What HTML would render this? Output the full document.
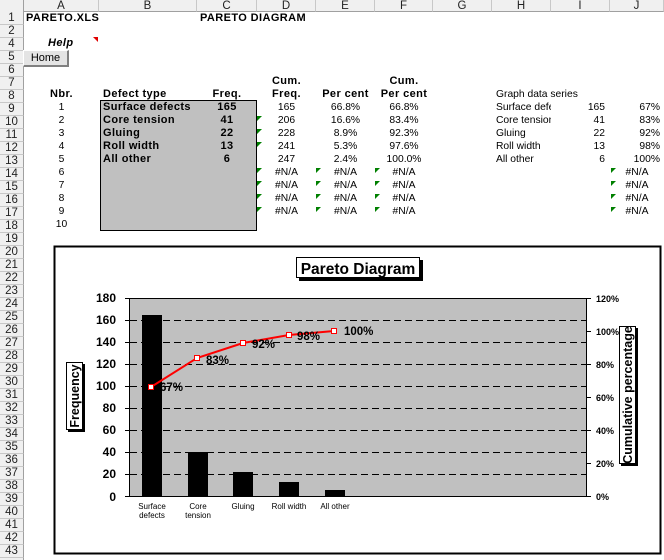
<!DOCTYPE html>
<html><head><meta charset="utf-8"><style>
*{margin:0;padding:0;box-sizing:border-box}
body{width:664px;height:560px;overflow:hidden;background:#fff;font-family:"Liberation Sans",Arial,sans-serif;font-size:10.3px;color:#000;position:relative}
.a{position:absolute;height:13px;line-height:13px;white-space:nowrap;overflow:hidden}
.b{font-weight:bold;font-size:11px;letter-spacing:0.4px}
.c{text-align:center}.r{text-align:right}
.hd{position:absolute;background:#f0f0f0;color:#222;font-size:11.5px;text-align:center}
.g{position:absolute;width:0;height:0;border-top:5px solid #008000;border-right:5px solid transparent}
</style></head><body>
<div class="hd" style="left:0;top:0;width:664px;height:12px;border-bottom:1px solid #a0a0a0"></div>
<div class="hd" style="left:0;top:0;width:24px;height:560px;border-right:1px solid #a0a0a0"></div>
<div id="cols"></div>
<div id="rows"></div>
<script>
var cb=[24,99,197,257,316,375,433,492,551,610,664],n="ABCDEFGHIJ",h="";
for(var i=0;i<10;i++){h+='<div class="hd" style="left:'+cb[i]+'px;top:0;width:'+(cb[i+1]-cb[i])+'px;height:12px;line-height:12px;border-right:1px solid #c8c8c8;border-bottom:1px solid #a0a0a0">'+n[i]+'</div>';}
document.getElementById('cols').innerHTML=h;h="";
var rs=[1,2];for(var r=4;r<=43;r++)rs.push(r);
for(var k=0;k<rs.length;k++){h+='<div class="hd" style="left:0;top:'+(12+13*k)+'px;width:24px;height:13px;line-height:13px;border-bottom:1px solid #c8c8c8;border-right:1px solid #a0a0a0">'+rs[k]+'</div>';}
document.getElementById('rows').innerHTML=h;
</script>
<div class="a b" style="left:26px;top:12px">PARETO.XLS</div>
<div class="a b" style="left:200px;top:12px">PARETO DIAGRAM</div>
<div class="a b" style="left:48px;top:37px;font-style:italic;font-size:11px">Help</div>
<div style="position:absolute;left:93px;top:37px;width:0;height:0;border-top:5px solid #e00000;border-left:5px solid transparent"></div>
<div style="position:absolute;left:23px;top:50px;width:46px;height:17px;background:#e4e4e4;border:1px solid #fff;border-right:2px solid #808080;border-bottom:2px solid #808080;text-align:center;line-height:14px;font-size:11px">Home</div>
<div style="position:absolute;left:100px;top:100px;width:157px;height:131px;background:#c0c0c0;border:1px solid #000"></div>
<div class="a b c" style="left:257px;top:75px;width:59px">Cum.</div>
<div class="a b c" style="left:375px;top:75px;width:58px">Cum.</div>
<div class="a b c" style="left:24px;top:88px;width:75px">Nbr.</div>
<div class="a b" style="left:103px;top:88px">Defect type</div>
<div class="a b c" style="left:197px;top:88px;width:60px">Freq.</div>
<div class="a b c" style="left:257px;top:88px;width:59px">Freq.</div>
<div class="a b c" style="left:316px;top:88px;width:59px">Per cent</div>
<div class="a b c" style="left:375px;top:88px;width:58px">Per cent</div>
<div class="a" style="left:496px;top:88px">Graph data series</div>

<div class="a c" style="left:24px;top:101px;width:75px">1</div><div class="a b" style="left:103px;top:101px">Surface defects</div><div class="a b c" style="left:197px;top:101px;width:60px">165</div><div class="a c" style="left:257px;top:101px;width:59px">165</div><div class="a c" style="left:316px;top:101px;width:59px">66.8%</div><div class="a c" style="left:375px;top:101px;width:58px">66.8%</div><div class="a" style="left:496px;top:101px;width:55px">Surface defects</div><div class="a r" style="left:551px;top:101px;width:54px">165</div><div class="a r" style="left:610px;top:101px;width:50px">67%</div>
<div class="a c" style="left:24px;top:114px;width:75px">2</div><div class="a b" style="left:103px;top:114px">Core tension</div><div class="a b c" style="left:197px;top:114px;width:60px">41</div><div class="a c" style="left:257px;top:114px;width:59px">206</div><div class="a c" style="left:316px;top:114px;width:59px">16.6%</div><div class="a c" style="left:375px;top:114px;width:58px">83.4%</div><div class="a" style="left:496px;top:114px;width:55px">Core tension</div><div class="a r" style="left:551px;top:114px;width:54px">41</div><div class="a r" style="left:610px;top:114px;width:50px">83%</div>
<div class="a c" style="left:24px;top:127px;width:75px">3</div><div class="a b" style="left:103px;top:127px">Gluing</div><div class="a b c" style="left:197px;top:127px;width:60px">22</div><div class="a c" style="left:257px;top:127px;width:59px">228</div><div class="a c" style="left:316px;top:127px;width:59px">8.9%</div><div class="a c" style="left:375px;top:127px;width:58px">92.3%</div><div class="a" style="left:496px;top:127px;width:55px">Gluing</div><div class="a r" style="left:551px;top:127px;width:54px">22</div><div class="a r" style="left:610px;top:127px;width:50px">92%</div>
<div class="a c" style="left:24px;top:140px;width:75px">4</div><div class="a b" style="left:103px;top:140px">Roll width</div><div class="a b c" style="left:197px;top:140px;width:60px">13</div><div class="a c" style="left:257px;top:140px;width:59px">241</div><div class="a c" style="left:316px;top:140px;width:59px">5.3%</div><div class="a c" style="left:375px;top:140px;width:58px">97.6%</div><div class="a" style="left:496px;top:140px;width:55px">Roll width</div><div class="a r" style="left:551px;top:140px;width:54px">13</div><div class="a r" style="left:610px;top:140px;width:50px">98%</div>
<div class="a c" style="left:24px;top:153px;width:75px">5</div><div class="a b" style="left:103px;top:153px">All other</div><div class="a b c" style="left:197px;top:153px;width:60px">6</div><div class="a c" style="left:257px;top:153px;width:59px">247</div><div class="a c" style="left:316px;top:153px;width:59px">2.4%</div><div class="a c" style="left:375px;top:153px;width:58px">100.0%</div><div class="a" style="left:496px;top:153px;width:55px">All other</div><div class="a r" style="left:551px;top:153px;width:54px">6</div><div class="a r" style="left:610px;top:153px;width:50px">100%</div>
<div id="na"></div>
<script>
var h="";
for(var i=0;i<5;i++){var t=166+13*i;h+='<div class="a c" style="left:24px;top:'+t+'px;width:75px">'+(6+i)+'</div>';
if(i<4){h+='<div class="a c" style="left:257px;top:'+t+'px;width:59px">#N/A</div><div class="a c" style="left:316px;top:'+t+'px;width:59px">#N/A</div><div class="a c" style="left:375px;top:'+t+'px;width:58px">#N/A</div><div class="a c" style="left:610px;top:'+t+'px;width:54px">#N/A</div>';
h+='<div class="g" style="left:257px;top:'+(t+2)+'px"></div><div class="g" style="left:316px;top:'+(t+2)+'px"></div><div class="g" style="left:375px;top:'+(t+2)+'px"></div><div class="g" style="left:611px;top:'+(t+2)+'px"></div>';}}
for(var j=0;j<3;j++)h+='<div class="g" style="left:257px;top:'+(116+13*j)+'px"></div>';
document.getElementById('na').innerHTML=h;
</script>
<svg style="position:absolute;left:0;top:0" width="664" height="560" font-family="Liberation Sans, Arial, sans-serif">
<rect x="54.5" y="246.5" width="606" height="307" fill="#fff" stroke="#000" stroke-width="2"/>
<rect x="299" y="260" width="124" height="21" fill="#000"/>
<rect x="296.5" y="257.5" width="123" height="20" fill="#fff" stroke="#000"/>
<text x="358" y="274" text-anchor="middle" font-size="15.5" font-weight="bold">Pareto Diagram</text>
<rect x="129.5" y="298.5" width="457" height="198" fill="#c0c0c0" stroke="#000"/>
<g stroke="#000" stroke-dasharray="7,4">
<line x1="130" x2="586" y1="320.5" y2="320.5"/><line x1="130" x2="586" y1="342.5" y2="342.5"/><line x1="130" x2="586" y1="364.5" y2="364.5"/><line x1="130" x2="586" y1="386.5" y2="386.5"/><line x1="130" x2="586" y1="408.5" y2="408.5"/><line x1="130" x2="586" y1="430.5" y2="430.5"/><line x1="130" x2="586" y1="452.5" y2="452.5"/><line x1="130" x2="586" y1="474.5" y2="474.5"/>
</g>
<g stroke="#000">
<line x1="125" x2="130" y1="298.5" y2="298.5"/><line x1="125" x2="130" y1="320.5" y2="320.5"/><line x1="125" x2="130" y1="342.5" y2="342.5"/><line x1="125" x2="130" y1="364.5" y2="364.5"/><line x1="125" x2="130" y1="386.5" y2="386.5"/><line x1="125" x2="130" y1="408.5" y2="408.5"/><line x1="125" x2="130" y1="430.5" y2="430.5"/><line x1="125" x2="130" y1="452.5" y2="452.5"/><line x1="125" x2="130" y1="474.5" y2="474.5"/><line x1="125" x2="130" y1="496.5" y2="496.5"/>
<line x1="587" x2="591" y1="298.5" y2="298.5"/><line x1="587" x2="591" y1="331.5" y2="331.5"/><line x1="587" x2="591" y1="364.5" y2="364.5"/><line x1="587" x2="591" y1="397.5" y2="397.5"/><line x1="587" x2="591" y1="430.5" y2="430.5"/><line x1="587" x2="591" y1="463.5" y2="463.5"/><line x1="587" x2="591" y1="496.5" y2="496.5"/>
</g>
<g font-size="12" font-weight="bold" text-anchor="end">
<text x="116" y="302">180</text><text x="116" y="324">160</text><text x="116" y="346">140</text><text x="116" y="368">120</text><text x="116" y="390">100</text><text x="116" y="412">80</text><text x="116" y="434">60</text><text x="116" y="456">40</text><text x="116" y="478">20</text><text x="116" y="501">0</text>
</g>
<g font-size="9" font-weight="bold">
<text x="596" y="302">120%</text><text x="596" y="335">100%</text><text x="596" y="368">80%</text><text x="596" y="401">60%</text><text x="596" y="434">40%</text><text x="596" y="467">20%</text><text x="596" y="500">0%</text>
</g>
<g fill="#000">
<rect x="142" y="315" width="20" height="182"/><rect x="188" y="452" width="20" height="45"/><rect x="233" y="472" width="20" height="25"/><rect x="279" y="482" width="20" height="15"/><rect x="325" y="490" width="20" height="7"/>
</g>
<polyline points="151,387 197,358 243,343 289,335 334,331" fill="none" stroke="#ff0000" stroke-width="2"/>
<g fill="#fff" stroke="#ff0000">
<rect x="148.5" y="384.5" width="5" height="5"/><rect x="194.5" y="355.5" width="5" height="5"/><rect x="240.5" y="340.5" width="5" height="5"/><rect x="286.5" y="332.5" width="5" height="5"/><rect x="331.5" y="328.5" width="5" height="5"/>
</g>
<g font-size="11.5" font-weight="bold">
<text x="160" y="391">67%</text><text x="206" y="364">83%</text><text x="252" y="348">92%</text><text x="297" y="340">98%</text><text x="344" y="335">100%</text>
</g>
<g font-size="8" text-anchor="middle">
<text x="152" y="509">Surface</text><text x="152" y="518">defects</text><text x="198" y="509">Core</text><text x="198" y="518">tension</text><text x="243" y="509">Gluing</text><text x="289" y="509">Roll width</text><text x="335" y="509">All other</text>
</g>
<rect x="68" y="364" width="17" height="68" fill="#000"/>
<rect x="66.5" y="362.5" width="16" height="67" fill="#fff" stroke="#000"/>
<text transform="translate(79,396) rotate(-90)" text-anchor="middle" font-size="12.5" font-weight="bold">Frequency</text>
<rect x="621" y="328" width="17" height="138" fill="#000"/>
<rect x="619.5" y="326.5" width="16" height="137" fill="#fff" stroke="#000"/>
<text transform="translate(632,395) rotate(-90)" text-anchor="middle" font-size="12.5" font-weight="bold">Cumulative percentage</text>
</svg>
</body></html>
